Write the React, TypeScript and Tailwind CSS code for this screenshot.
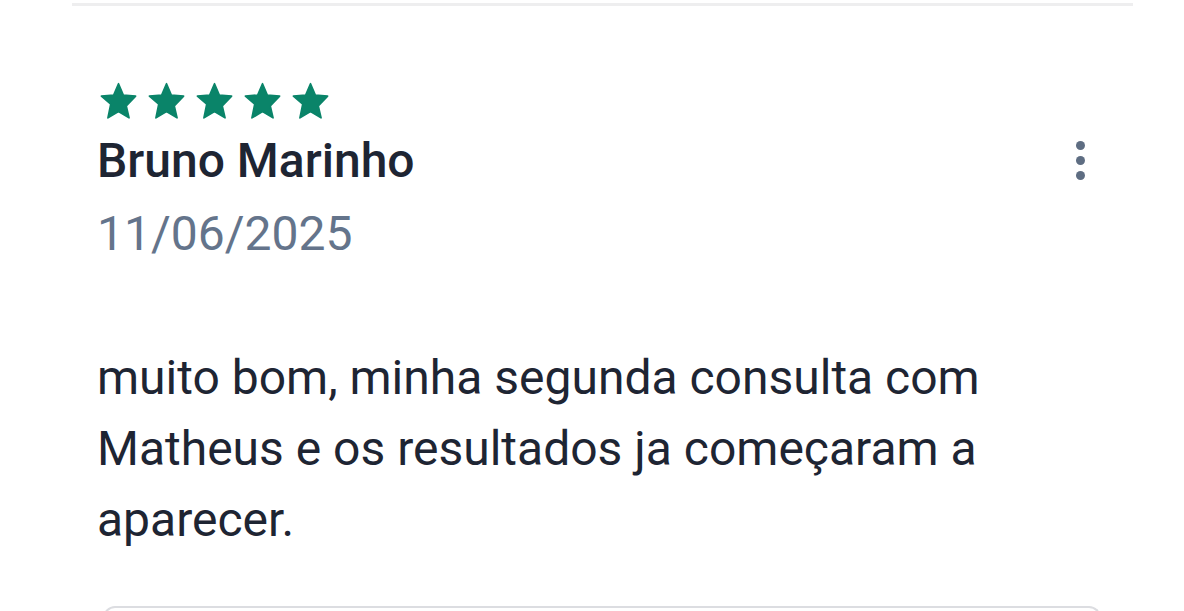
const STAR = 'M12 17.27L18.18 21l-1.64-7.03L22 8.24l-7.19-.61L12 1 9.19 7.63 2 8.24l5.46 4.73L5.82 21z';

function Stars({ count }: { count: number }) {
  return (
    <div className="flex gap-[7px]">
      {Array.from({ length: count }).map((_, i) => (
        <svg key={i} viewBox="0 0 24 24" className="h-[41px] w-[41px]" fill="#0a8469">
          <path d={STAR} stroke="#0a8469" strokeWidth="1" strokeLinejoin="round" />
        </svg>
      ))}
    </div>
  );
}

function MoreButton() {
  return (
    <div className="flex flex-col items-center gap-[6px] px-2 py-1">
      <span className="h-[9px] w-[9px] rounded-full bg-[#5e6d82]" />
      <span className="h-[9px] w-[9px] rounded-full bg-[#5e6d82]" />
      <span className="h-[9px] w-[9px] rounded-full bg-[#5e6d82]" />
    </div>
  );
}

export default function App() {
  return (
    <div className="h-[611px] w-[1184px] overflow-hidden bg-white font-['Roboto',sans-serif]">
      <div className="ml-[72px] mt-[3px] h-[3px] w-[1061px] bg-[#eeeeef]" />
      <div className="pl-[97px] pr-[91px] pt-[76px]">
        <div className="ml-[1px]">
          <Stars count={5} />
        </div>
        <div className="mt-[7px] flex items-start justify-between">
          <div>
            <h3 className="text-[48px] font-medium leading-[62px] text-[#1e2533]">Bruno Marinho</h3>
            <p className="mt-[11px] text-[48px] leading-[62px] text-[#64748b]">11/06/2025</p>
          </div>
          <div className="mt-[7px]">
            <MoreButton />
          </div>
        </div>
        <p className="mt-[77px] max-w-[920px] text-[48px] leading-[71px] text-[#1e2533]">
          muito bom, minha segunda consulta com Matheus e os resultados ja começaram a aparecer.
        </p>
      </div>
      <div className="ml-[103px] mt-[51px] h-[40px] w-[998px] rounded-t-[12px] border-2 border-b-0 border-[#dcdde1]" />
    </div>
  );
}
